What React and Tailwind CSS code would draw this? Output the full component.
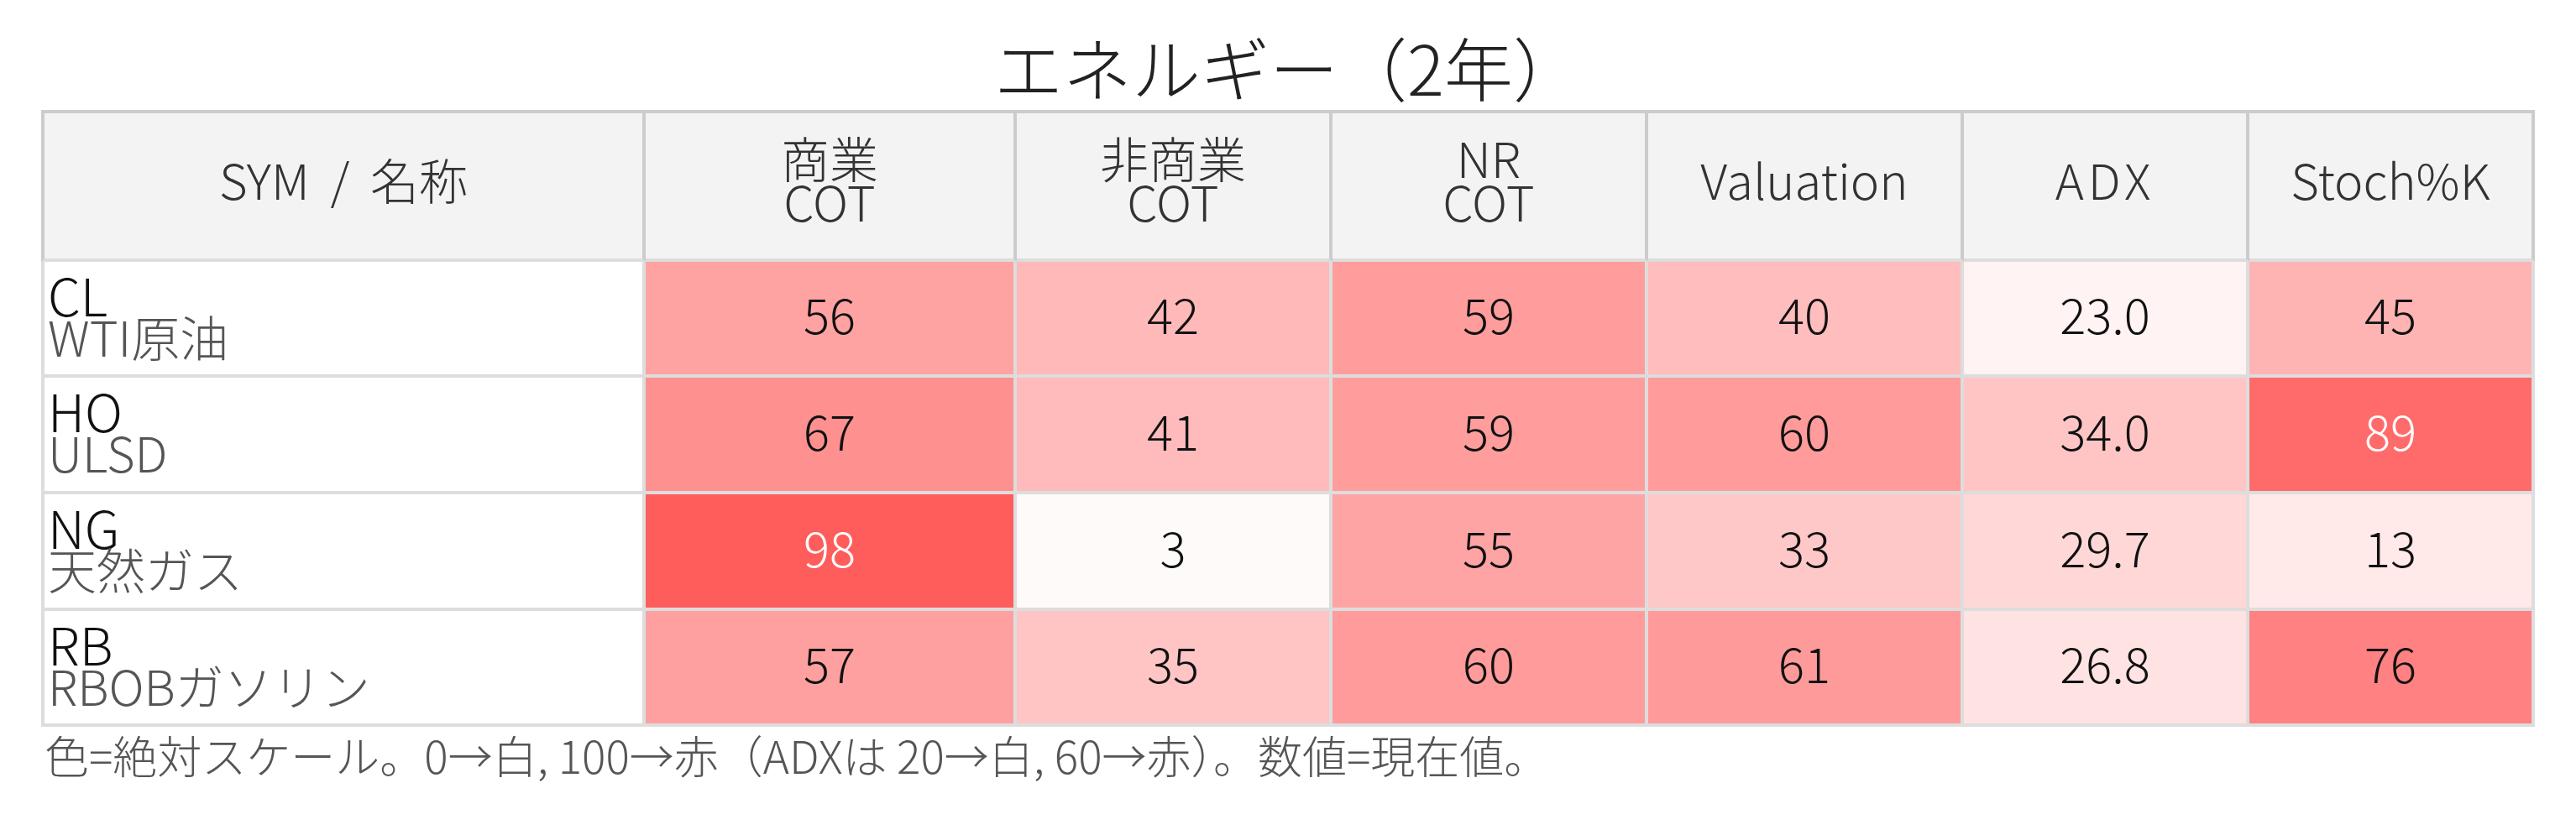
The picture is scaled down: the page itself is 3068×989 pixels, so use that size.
const headers = [
  { lines: ["SYM / 名称"], cls: "[word-spacing:12px]" },
  { lines: ["商業", "COT"], cls: "" },
  { lines: ["非商業", "COT"], cls: "" },
  { lines: ["NR", "COT"], cls: "" },
  { lines: ["Valuation"], cls: "" },
  { lines: ["ADX"], cls: "tracking-[5px]" },
  { lines: ["Stoch%K"], cls: "" },
];

const widths = ["w-[720px]", "w-[442px]", "w-[376px]", "w-[376px]", "w-[376px]", "w-[340px]", "w-[340px]"];

const rows = [
  { sym: "CL", name: "WTI原油", vals: [56, 42, 59, 40, 23.0, 45], h: "h-[138px]" },
  { sym: "HO", name: "ULSD", vals: [67, 41, 59, 60, 34.0, 89], h: "h-[139px]" },
  { sym: "NG", name: "天然ガス", vals: [98, 3, 55, 33, 29.7, 13], h: "h-[139px]" },
  { sym: "RB", name: "RBOBガソリン", vals: [57, 35, 60, 61, 26.8, 76], h: "h-[138px]" },
];

// 0 -> white, 100 -> red (ADX: 20 -> white, 60 -> red)
function score(v, i) {
  if (i === 4) return Math.max(0, Math.min(100, ((v - 20) / 40) * 100));
  return v;
}

function cellColor(s) {
  const g = Math.round(255 - s * 1.66);
  return `rgb(255, ${g}, ${g})`;
}

export default function App() {
  return (
    <div className="bg-white w-[3068px] h-[989px] font-['Noto_Sans_CJK_JP','Noto_Sans',sans-serif] font-light">
      <div className="ml-[49px] w-[2970px]">
        {/* Title */}
        <div className="h-[131px] pt-[38px] text-center text-[82px] leading-[82px] text-[#222]">
          エネルギー（2年）
        </div>

        {/* Header */}
        <div className="flex">
          {headers.map((hd, i) => (
            <div
              key={i}
              className={`${widths[i]} h-[181px] shrink-0 border-t-4 border-r-4 border-b-4 ${
                i === 0 ? "border-l-4" : ""
              } border-[#cccccc] border-b-[#dddddd] bg-[#f3f3f3] flex flex-col items-center justify-center pb-[17px] text-[58px] leading-[52px] text-[#333] ${hd.cls}`}
            >
              {hd.lines.map((l) => (
                <div key={l}>{l}</div>
              ))}
            </div>
          ))}
        </div>

        {/* Rows */}
        {rows.map((r) => (
          <div key={r.sym} className={`flex ${r.h}`}>
            <div className={`${widths[0]} shrink-0 border-l-4 border-r-4 border-b-4 border-[#dddddd] bg-white flex flex-col justify-center pl-[4px] pb-[9px]`}>
              <div className="text-[62px] leading-[50px] text-[#111]">{r.sym}</div>
              <div className="text-[58px] leading-[50px] text-[#555]">{r.name}</div>
            </div>
            {r.vals.map((v, i) => {
              const s = score(v, i);
              return (
                <div
                  key={i}
                  className={`${widths[i + 1]} shrink-0 border-r-4 border-b-4 border-[#dddddd] flex items-center justify-center pb-[12px] text-[58px] leading-[58px] ${
                    s >= 80 ? "text-white" : "text-[#111]"
                  }`}
                  style={{ backgroundColor: cellColor(s) }}
                >
                  {i === 4 ? v.toFixed(1) : v}
                </div>
              );
            })}
          </div>
        ))}

        {/* Footnote */}
        <div className="pt-[3px] pl-[4px] text-[53px] leading-[60px] text-[#555]">
          色=絶対スケール。0→白, 100→赤（ADXは 20→白, 60→赤）。数値=現在値。
        </div>
      </div>
    </div>
  );
}
